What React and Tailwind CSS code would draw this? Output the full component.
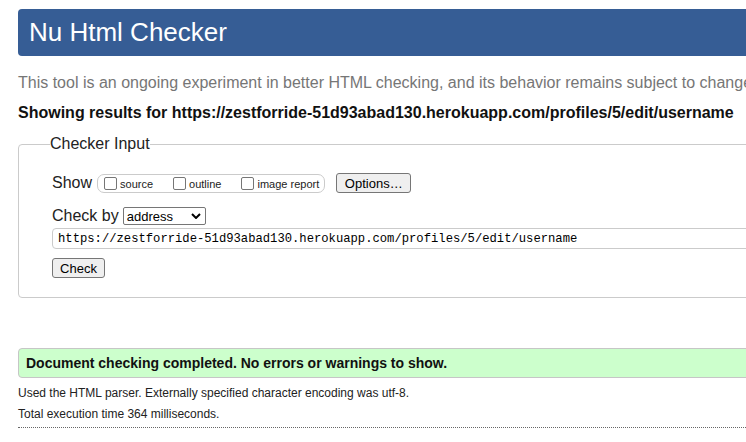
export default function App() {
  const options = ['source', 'outline', 'image report'];

  return (
    <div className="w-[746px] h-[442px] overflow-hidden bg-white text-[#222] font-['Liberation_Sans',Arial,sans-serif]">
      <div className="w-[1100px] pl-[18px]">
        <header className="mt-[9px] h-[47px] bg-[#365d95] rounded-[4px] pl-[11px] pb-[2px] flex items-center">
          <h1 className="text-white text-[26px] leading-none">Nu Html Checker</h1>
        </header>

        <p className="mt-[18px] text-[16px] leading-[18px] text-[#767676] whitespace-nowrap">
          This tool is an ongoing experiment in better HTML checking, and its behavior remains subject to change
        </p>
        <p className="mt-[12px] text-[16px] leading-[18px] font-bold text-[#111] whitespace-nowrap">
          Showing results for https://zestforride-51d93abad130.herokuapp.com/profiles/5/edit/username
        </p>

        <fieldset className="mt-[13px] border border-[#cbcbcb] rounded-[4px] pl-[33px] pt-[20px] pb-[17px]">
          <legend className="-ml-[2px] text-[16px] leading-[18px]">Checker Input</legend>

          <div className="flex items-center h-[20px]">
            <span className="text-[16px] leading-[18px]">Show</span>
            <div className="ml-[5px] h-[19px] border border-[#cbcbcb] rounded-[7px] pl-[6px] pr-[5px] flex items-center">
              {options.map((label, i) => (
                <label key={label} className={`flex items-center ${i > 0 ? 'ml-[20px]' : ''}`}>
                  <span className="w-[13px] h-[13px] border border-[#767676] rounded-[2px] bg-white" />
                  <span className="ml-[3px] text-[11px] leading-[13px] pt-[2px]">{label}</span>
                </label>
              ))}
            </div>
            <button className="ml-[11px] w-[75px] h-[20px] bg-[#efefef] border border-[#767676] rounded-[3px] text-[13px] leading-none text-black">
              Options…
            </button>
          </div>

          <div className="mt-[14px] flex items-center h-[18px]">
            <span className="text-[16px] leading-[18px]">Check by</span>
            <div className="ml-[4px] w-[83px] h-[18px] border border-[#767676] rounded-[2px] pl-[3px] pr-[4px] flex items-center justify-between">
              <span className="text-[13px] leading-none text-black">address</span>
              <svg width="10" height="6" viewBox="0 0 10 6" fill="none">
                <path d="M1 1 L5 5 L9 1" stroke="#000" strokeWidth="2" />
              </svg>
            </div>
          </div>

          <div className="mt-[3px] h-[21px] border border-[#cbcbcb] rounded-[4px] pl-[5px] pt-[2px] flex items-center">
            <span className="font-['Liberation_Mono',monospace] text-[12.2px] leading-none text-black whitespace-nowrap">
              https://zestforride-51d93abad130.herokuapp.com/profiles/5/edit/username
            </span>
          </div>

          <button className="mt-[9px] w-[53px] h-[20px] bg-[#efefef] border border-[#767676] rounded-[3px] text-[13px] leading-none text-black">
            Check
          </button>
        </fieldset>

        <div className="mt-[50px] h-[30px] bg-[#ccffcc] border border-[#c6c6c6] rounded-[4px] pl-[7px] flex items-center">
          <p className="text-[14px] leading-[16px] font-bold text-[#111]">
            Document checking completed. No errors or warnings to show.
          </p>
        </div>

        <p className="mt-[8px] text-[12px] leading-[14px]">
          Used the HTML parser. Externally specified character encoding was utf-8.
        </p>
        <p className="mt-[7px] text-[12px] leading-[14px]">Total execution time 364 milliseconds.</p>
        <div className="mt-[6px] border-t border-dotted border-[#666]" />
      </div>
    </div>
  );
}
